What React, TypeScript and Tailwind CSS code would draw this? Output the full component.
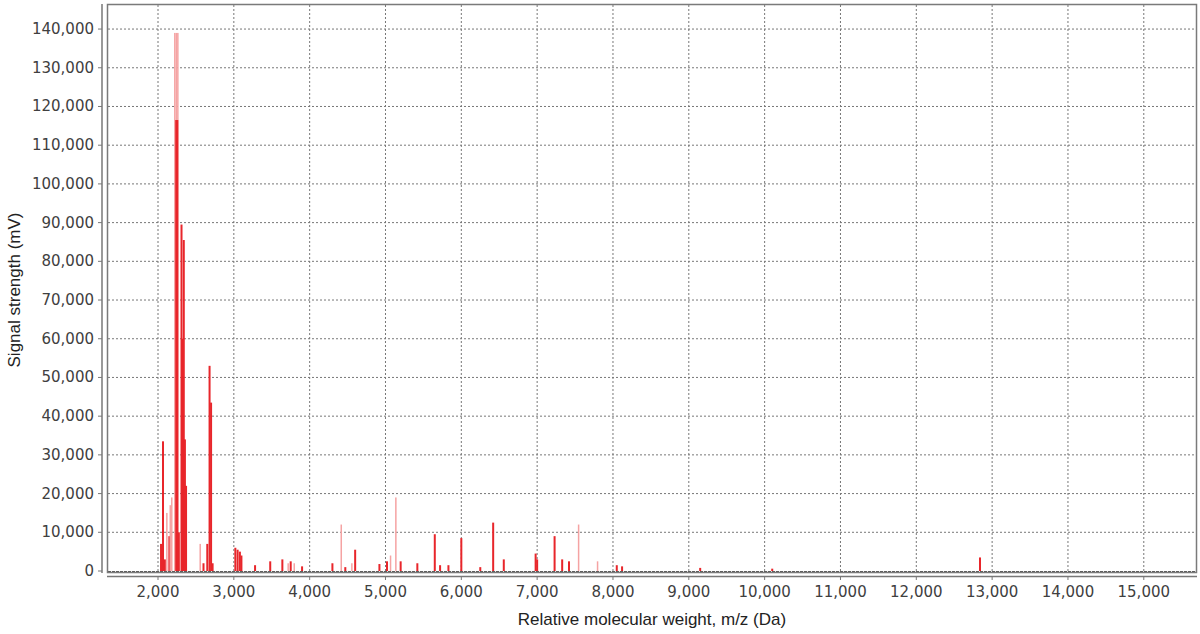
import React from "react";

// peaks: [m/z, signal, light?]
const peaks: [number, number, boolean?][] = [
  [2040, 7000], [2066, 33500], [2090, 3000], [2120, 15000, true], [2150, 9000], [2165, 17000, true], [2185, 19000, true],
  [2225, 139000, true], [2245, 139000, true], [2265, 139000, true], [2240, 116500], [2255, 116500], [2275, 10000],
  [2310, 89500], [2325, 60000], [2340, 85500], [2355, 34000], [2370, 22000],
  [2560, 7000, true], [2600, 2000], [2650, 7000], [2680, 53000], [2700, 43500], [2720, 2000],
  [3020, 6000], [3050, 5500], [3080, 5000], [3100, 4000], [3280, 1500], [3480, 2500], [3640, 3000],
  [3720, 2000, true], [3750, 2500], [3800, 2000, true], [3900, 1200], [4300, 2000],
  [4420, 12000, true], [4470, 1000], [4560, 2000, true], [4600, 5500], [4920, 1800], [5020, 2500], [5070, 4000, true],
  [5140, 19000, true], [5200, 2500], [5420, 2000], [5650, 9500], [5720, 1500], [5830, 1500],
  [6000, 8500], [6250, 1000], [6420, 12500], [6560, 3000], [6980, 4500], [7000, 3000], [7230, 9000],
  [7330, 3000], [7420, 2500], [7550, 12000, true], [7800, 2500, true], [8050, 1500], [8120, 1200],
  [9150, 800], [10100, 600], [12840, 3500],
];

const X = (mz: number) => 158 + (mz - 2000) * 0.07583;
const Y = (v: number) => 571 - v * 0.003871;
const fmt = (n: number) => n.toLocaleString("en-US");

export default function App() {
  const xTicks = Array.from({ length: 14 }, (_, i) => 2000 + i * 1000);
  const yTicks = Array.from({ length: 15 }, (_, i) => i * 10000);
  return (
    <div className="w-[1200px] h-[634px] bg-white" style={{ fontFamily: "Verdana, 'DejaVu Sans', sans-serif" }}>
      <svg width="1200" height="634" className="block">
        {/* grid */}
        {xTicks.map((t) => (
          <line key={t} x1={X(t)} x2={X(t)} y1={5} y2={571} stroke="#777" strokeWidth="1" strokeDasharray="2 2" />
        ))}
        {yTicks.slice(1).map((t) => (
          <line key={t} x1={108} x2={1196} y1={Y(t)} y2={Y(t)} stroke="#777" strokeWidth="1" strokeDasharray="2 2" />
        ))}
        {/* peaks */}
        {peaks.map(([mz, v, light], i) => (
          <rect key={i} x={X(mz) - 1} y={Y(v)} width={light ? 1.5 : 2} height={571 - Y(v)}
            fill={light ? "#f5a3a3" : "#e8262b"} />
        ))}
        <line x1={108} x2={1196} y1={571.5} y2={571.5} stroke="#555" strokeWidth="1" strokeDasharray="3 1" />
        {/* plot frame */}
        <rect x={107.5} y={4.5} width={1089} height={568} fill="none" stroke="#7a7a7a" strokeWidth="1.5" />
        {/* y axis */}
        <line x1={102} x2={102} y1={4} y2={573} stroke="#777" strokeWidth="1.5" />
        {yTicks.map((t) => (
          <g key={t}>
            <line x1={98} x2={102} y1={Y(t)} y2={Y(t)} stroke="#777" />
            <text x={94} y={Y(t) + 5} textAnchor="end" fontSize="15" fill="#404040">{fmt(t)}</text>
          </g>
        ))}
        {/* x axis */}
        <line x1={107} x2={1197} y1={576.5} y2={576.5} stroke="#777" strokeWidth="1.5" />
        {xTicks.map((t) => (
          <g key={t}>
            <line x1={X(t)} x2={X(t)} y1={576} y2={580} stroke="#777" />
            <text x={X(t)} y={597} textAnchor="middle" fontSize="15" fill="#404040">{fmt(t)}</text>
          </g>
        ))}
        <text x={652} y={625} textAnchor="middle" fontSize="17" fill="#222" fontFamily="'Liberation Sans', Arial, sans-serif">
          Relative molecular weight, m/z (Da)
        </text>
        <text transform="translate(20 290) rotate(-90)" textAnchor="middle" fontSize="17" fill="#222" fontFamily="'Liberation Sans', Arial, sans-serif">
          Signal strength (mV)
        </text>
      </svg>
    </div>
  );
}
